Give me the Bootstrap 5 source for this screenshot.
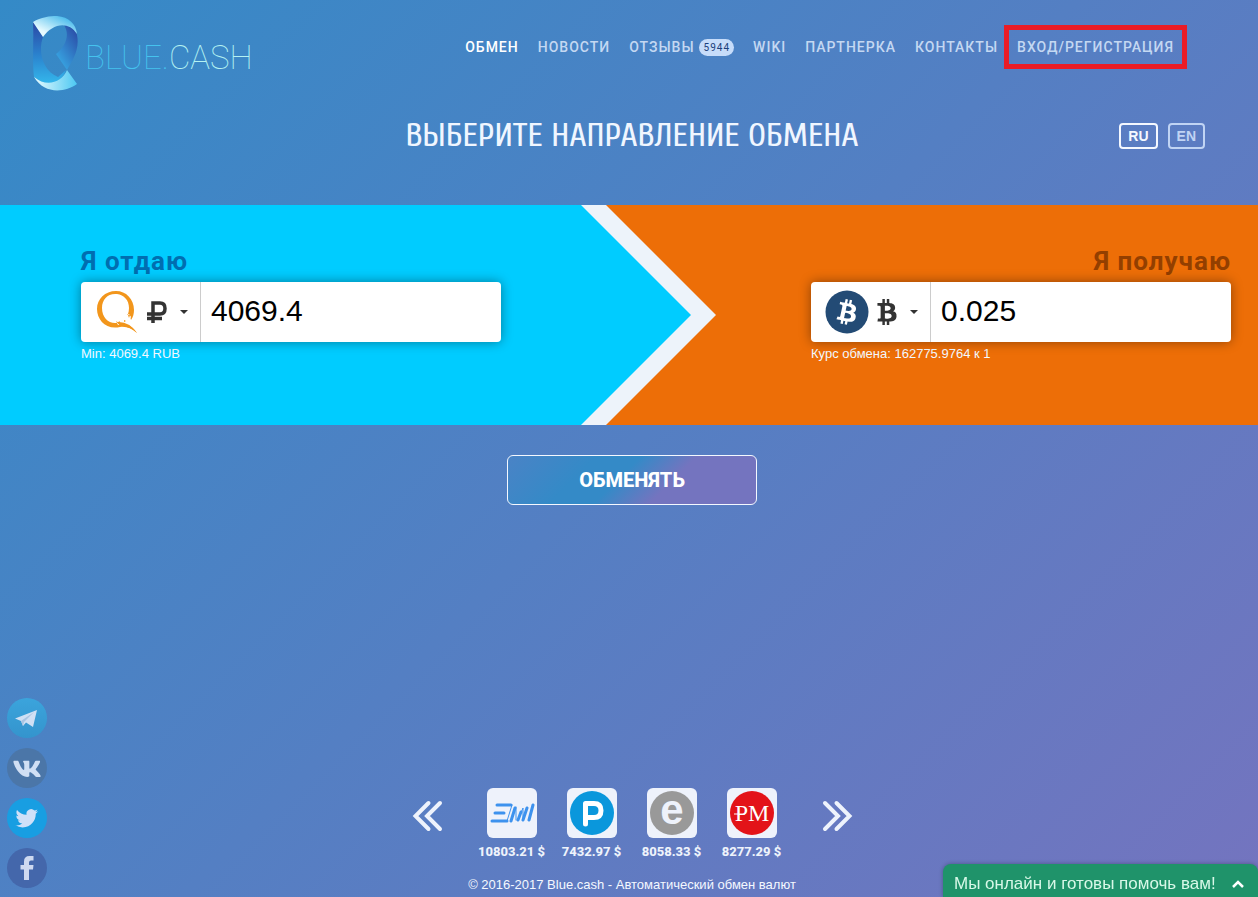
<!DOCTYPE html>
<html lang="ru">
<head>
<meta charset="utf-8">
<meta name="viewport" content="width=device-width, initial-scale=1">
<title>Blue.cash</title>
<link href="https://cdn.jsdelivr.net/npm/bootstrap@5.3.0/dist/css/bootstrap.min.css" rel="stylesheet">
<style>
  body { font-family: Roboto, "Liberation Sans", sans-serif; background: linear-gradient(135deg, #348ac7, #7474bf) fixed; color: #eef3fb; font-size: 13px; line-height: 20px; }
  .page { padding-left: 6px; }
  .site-head { padding: 16px 75px 0 27px; }
  .brand-text { font-size: 33px; line-height: 40px; font-weight: 100; color: #45c3ee; margin: 8px 0 0 6px; }
  .brand-text span { color: #b4f2f2; }
  .main-nav .nav-link { color: #c4d8f2; font-size: 14px; font-weight: 500; letter-spacing: 1px; line-height: 20px; padding: 5px 9px 5px 10px; white-space: nowrap; }
  .main-nav .nav-link.active { color: #fff; }
  .main-nav { margin-top: 16px; }
  .count { background: #c6dcfa; color: #1c3f7c; font-size: 10px; font-weight: 400; line-height: 17px; padding: 0 4px 0 5px; margin-left: 4px; border-radius: 9px; display: inline-block; vertical-align: top; margin-top: 2px; }
  .framed { position: relative; }
  .framed::after { content: ""; position: absolute; inset: -7px -4px -7px -3px; border: 5px solid #ea1c26; pointer-events: none; }
  .title-row { display: grid; grid-template-columns: 1fr auto 1fr; align-items: center; padding: 24px 0 49px; }
  .title-row h1 { grid-column: 2; margin: 0; font: 400 34px/40px "Cuprum", "Roboto Condensed", "Liberation Sans Narrow", Roboto, sans-serif; color: #f0f6ff; }
  .langs { gap: 10px; padding-right: 53px; }
  .langs .btn { font: 700 14px/20px "Liberation Sans", sans-serif; border: 2px solid; border-radius: 4px; padding: 1px 7px; color: #c0d4f4; }
  .langs .btn.active { color: #f4f8ff; border-color: #f4f8ff; }
  .band { position: relative; background: #ed6e07; height: 220px; isolation: isolate; }
  .band::before, .band::after { content: ""; position: absolute; inset: 0 auto 0 0; z-index: -1; clip-path: polygon(0 0, calc(100% - 110px) 0, 100% 50%, calc(100% - 110px) 100%, 0 100%); }
  .band::before { width: calc(50% + 87px); background: #edf3fa; }
  .band::after { width: calc(50% + 62px); background: #0cf; }
  .give, .take { padding: 41px 27px 0 81px; }
  .amount { width: 100%; max-width: 420px; }
  .amount label { font-size: 26px; line-height: 30px; font-weight: 700; letter-spacing: 1px; margin-bottom: 6px; display: block; }
  .give label { color: #006eb0; }
  .take label { color: #933f00; text-align: right; }
  .amount .input-group { height: 60px; box-shadow: 0 0 12px rgba(0,0,0,.4); border-radius: 4px; }
  .amount .btn { width: 120px; background: #fff; border: 0; border-right: 1px solid #ccc; border-radius: 4px 0 0 4px; padding: 0 12px 0 14px; color: #333; }
  .amount .form-control { border: 0; color: #000; font: 30px/40px "Liberation Sans", sans-serif; padding: 9px 10px 11px 11px; border-radius: 0 4px 4px 0; }
  .amount .dropdown-toggle::after { margin: 0 0 0 auto; border-width: 4px; border-bottom: 0; }
  .hint { font: 13px/20px "Liberation Sans", sans-serif; margin-top: 2px; color: #f4f9ff; }
  .action { padding-top: 30px; }
  .go { width: 250px; height: 50px; border: 1px solid #f4f8ff; border-radius: 6px; color: #fff; font-weight: 800; font-size: 20px; background: linear-gradient(135deg, #4a83c6 0, #348ac7 30%, #348ac7 45%, #7474bf 64%); }
  .go:hover { color: #fff; }
  .socials { position: fixed; left: 7px; bottom: 9px; gap: 10px; }
  .socials a { width: 40px; height: 40px; }
  .socials svg, .tile svg, .arrow svg { display: block; overflow: visible; }
  .reserve { width: 80px; }
  .tile { width: 50px; height: 50px; border-radius: 6px; background: #eef2fb; margin: 0 auto 4px; }
  .reserve span { font-weight: 800; font-size: 13px; white-space: nowrap; }
  .arrow { border: 0; background: none; padding: 0; height: 56px; }
  .arrow-left { margin-right: 29px; }
  .arrow-right { margin-left: 30px; }
  .copy { font: 13px/20px "Liberation Sans", sans-serif; margin: 13px 0 2px; color: #f4f8ff; }
  .chat { position: fixed; right: 0; bottom: 0; width: 315px; height: 33px; background: #1f936a; color: #d8f8e8; border: 0; border-radius: 8px 8px 0 0; padding: 6px 14px 0 11px; font: 17px/24px "Liberation Sans", sans-serif; box-shadow: 0 0 4px rgba(0,0,0,.3); white-space: nowrap; }
</style>
</head>
<body>
<div class="min-vh-100 d-flex flex-column">
  <header class="page">
    <div class="site-head d-flex justify-content-between align-items-start">
      <a href="#" class="d-flex align-items-center text-decoration-none">
        <svg width="46" height="76" viewBox="0 0 46 76" aria-hidden="true">
          <defs>
            <linearGradient id="lt" x1="0" y1="1" x2="1" y2="0"><stop offset=".25" stop-color="#e8fbff"/><stop offset=".9" stop-color="#3bb5ea"/></linearGradient>
            <linearGradient id="ll" x1="0" y1="0" x2="0" y2="1"><stop offset=".05" stop-color="#2b4da8"/><stop offset=".5" stop-color="#2a7fcc"/><stop offset="1" stop-color="#34b8ec"/></linearGradient>
            <linearGradient id="lb" x1="0" y1="0" x2="1" y2="0"><stop offset="0" stop-color="#e8fbff"/><stop offset="1" stop-color="#4cc8f2"/></linearGradient>
            <linearGradient id="lr" x1="1" y1="0" x2=".3" y2="1"><stop offset=".1" stop-color="#2a4ba6"/><stop offset="1" stop-color="#38a8e4"/></linearGradient>
          </defs>
          <path d="M0 6C1 25-1 45 1 61C8 70 22 70 27 64C30 61 32 57 33 54L25 61C9 54 5 35 10 21Z" fill="url(#ll)"/>
          <path d="M28 8C37 8 43 12 44 19C47 34 39 45 34 54L23 38C31 32 38 20 31 9Z" fill="url(#lr)"/>
          <path d="M0 6C8 1 17 0 24 0C36 1 43 8 44 18C35 4 19 8 10 21Z" fill="url(#lt)"/>
          <path d="M1 61C14 72 29 66 34 54L44 68C31 77 11 78 1 61Z" fill="url(#lb)"/>
        </svg>
        <span class="brand-text">BLUE.<span>CASH</span></span>
      </a>
      <nav aria-label="Главное меню">
        <ul class="nav main-nav">
          <li class="nav-item"><a class="nav-link active" href="#">ОБМЕН</a></li>
          <li class="nav-item"><a class="nav-link" href="#">НОВОСТИ</a></li>
          <li class="nav-item"><a class="nav-link" href="#">ОТЗЫВЫ<span class="count">5944</span></a></li>
          <li class="nav-item"><a class="nav-link" href="#">WIKI</a></li>
          <li class="nav-item"><a class="nav-link" href="#">ПАРТНЕРКА</a></li>
          <li class="nav-item"><a class="nav-link" href="#">КОНТАКТЫ</a></li>
          <li class="nav-item framed"><a class="nav-link" href="#">ВХОД/РЕГИСТРАЦИЯ</a></li>
        </ul>
      </nav>
    </div>
    <div class="title-row">
      <h1>ВЫБЕРИТЕ НАПРАВЛЕНИЕ ОБМЕНА</h1>
      <div class="langs d-flex justify-content-end">
        <button type="button" class="btn active">RU</button>
        <button type="button" class="btn">EN</button>
      </div>
    </div>
  </header>

  <main>
    <section class="band">
      <div class="row g-0">
        <div class="col-6 give">
          <div class="amount">
            <label for="give">Я отдаю</label>
            <div class="input-group">
              <button class="btn dropdown-toggle d-flex align-items-center" type="button" aria-label="Валюта: Qiwi RUB">
                <svg width="44" height="44" viewBox="0 0 44 44" aria-hidden="true">
                  <path fill="#f2961c" fill-rule="evenodd" d="M21 1C31 1 39 9 39 20C39 24 38 27 36 30L35 26L32 24L33 28L30 27L31 30L27 29L29 33L24 31L24 33L21 31L23 35C31 33 38 36 42 43C36 38 31 36 25 37C11 40 2 30 2 19C2 9 10 1 21 1ZM22 4C13 3 7 9 7 18C7 27 13 33 20 33C28 33 34 27 34 18C34 10 29 5 22 4Z"/>
                  <path fill="#fff" d="M22 31L34 24L36 27L33 31L36 35L29 34Z"/>
                  <path fill="#f2961c" d="M24 31l2 2-3 1zM29 30l2 1-2 1zM33 25l2 0-1 3zM22 32q12-1 20 11q-7-7-17-7z"/>
                </svg>
                <svg width="20" height="22" viewBox="0 0 20 22" class="ms-2" aria-hidden="true"><path d="M6 22V2H13Q18 2 18 7.500T13 13H0M0 17.500H15" fill="none" stroke="#333" stroke-width="3.500"/></svg>
              </button>
              <input id="give" class="form-control" type="text" value="4069.4">
            </div>
            <div class="hint">Min: 4069.4 RUB</div>
          </div>
        </div>
        <div class="col-6 take d-flex justify-content-end">
          <div class="amount">
            <label for="take">Я получаю</label>
            <div class="input-group">
              <button class="btn dropdown-toggle d-flex align-items-center" type="button" aria-label="Валюта: Bitcoin BTC">
                <svg width="44" height="44" viewBox="0 0 44 44" aria-hidden="true"><circle cx="22" cy="22" r="21.500" fill="#234b75"/><g transform="rotate(12 22 22) translate(13 9.500) scale(.049)"><path fill="#fff" d="M310.204 242.638c27.73-14.18 45.377-39.39 41.28-81.3-5.358-57.351-52.458-76.573-114.85-81.929V0h-48.528v77.203c-12.605 0-25.525.315-38.444.63V0h-48.53v79.409c-17.842.539-38.622.276-97.37 0v51.678c38.314-.678 58.417-3.14 63.023 21.427v217.429c-2.925 19.492-18.524 16.685-53.255 16.071L3.765 443.68c88.481 0 97.37.315 97.37.315V512h48.53v-67.06c13.234.315 26.154.315 38.444.315V512h48.528v-68.005c81.299-4.412 135.647-24.894 142.895-101.467 5.671-61.446-23.32-88.862-69.326-99.89zM150.608 134.553c27.415 0 113.126-8.507 113.126 48.528 0 54.515-85.71 48.212-113.126 48.212v-96.74zm0 251.776V279.821c32.772 0 133.127-9.138 133.127 53.255-.001 60.186-100.355 53.253-133.127 53.253z"/></g></svg>
                <svg width="20" height="26" viewBox="0 0 384 512" class="ms-2" aria-hidden="true"><path fill="#333" d="M310.204 242.638c27.73-14.18 45.377-39.39 41.28-81.3-5.358-57.351-52.458-76.573-114.85-81.929V0h-48.528v77.203c-12.605 0-25.525.315-38.444.63V0h-48.53v79.409c-17.842.539-38.622.276-97.37 0v51.678c38.314-.678 58.417-3.14 63.023 21.427v217.429c-2.925 19.492-18.524 16.685-53.255 16.071L3.765 443.68c88.481 0 97.37.315 97.37.315V512h48.53v-67.06c13.234.315 26.154.315 38.444.315V512h48.528v-68.005c81.299-4.412 135.647-24.894 142.895-101.467 5.671-61.446-23.32-88.862-69.326-99.89zM150.608 134.553c27.415 0 113.126-8.507 113.126 48.528 0 54.515-85.71 48.212-113.126 48.212v-96.74zm0 251.776V279.821c32.772 0 133.127-9.138 133.127 53.255-.001 60.186-100.355 53.253-133.127 53.253z"/></svg>
              </button>
              <input id="take" class="form-control" type="text" value="0.025">
            </div>
            <div class="hint">Курс обмена: 162775.9764 к 1</div>
          </div>
        </div>
      </div>
    </section>
    <div class="page action text-center">
      <button type="button" class="btn go">ОБМЕНЯТЬ</button>
    </div>
  </main>

  <footer class="page mt-auto text-center">
    <div class="d-flex justify-content-center align-items-start">
      <button type="button" class="arrow arrow-left" aria-label="Назад"><svg width="30" height="56" viewBox="0 0 30 56"><path d="M15.500 15L2.500 28L15.500 41M27 15L14 28L27 41" fill="none" stroke="#eef3fc" stroke-width="4" stroke-linecap="round"/></svg></button>
      <div class="reserve">
        <div class="tile"><svg width="50" height="50" viewBox="0 0 50 50"><g fill="none" stroke="#3d92ee" stroke-width="3" stroke-linecap="round"><path d="M10 17H24M8 25H17M5 33H20M28 20L24 33M34 24L31 32M40 20L36 32M46 17L42 32"/><path d="M20 33L25 17M29 19V32M31 32L36 20V32M42 32L46 17" stroke-width="1"/></g></svg></div>
        <span>10803.21 $</span>
      </div>
      <div class="reserve">
        <div class="tile"><svg width="50" height="50" viewBox="0 0 50 50"><circle cx="25" cy="25" r="22" fill="#0a97dc"/><path d="M18.500 36V15.500H27Q34 15.500 34 22.500T27 29.500H20" fill="none" stroke="#fff" stroke-width="5" stroke-linecap="round" stroke-linejoin="round"/></svg></div>
        <span>7432.97 $</span>
      </div>
      <div class="reserve">
        <div class="tile"><svg width="50" height="50" viewBox="0 0 50 50"><circle cx="25" cy="25" r="22" fill="#999"/><text x="25" y="36" text-anchor="middle" font-family="Liberation Sans" font-weight="700" font-size="42" fill="#eef2fb">e</text></svg></div>
        <span>8058.33 $</span>
      </div>
      <div class="reserve">
        <div class="tile"><svg width="50" height="50" viewBox="0 0 50 50"><circle cx="25" cy="25" r="22" fill="#e31319"/><text x="25" y="33" text-anchor="middle" font-family="Liberation Serif" font-size="24" fill="#fff">PM</text><path d="M7 26H18" stroke="#fff"/></svg></div>
        <span>8277.29 $</span>
      </div>
      <button type="button" class="arrow arrow-right" aria-label="Вперёд"><svg width="30" height="56" viewBox="0 0 30 56"><path d="M14.500 15L27.500 28L14.500 41M3 15L16 28L3 41" fill="none" stroke="#eef3fc" stroke-width="4" stroke-linecap="round"/></svg></button>
    </div>
    <p class="copy">© 2016-2017 Blue.cash - Автоматический обмен валют</p>
  </footer>
</div>

<div class="socials d-flex flex-column">
  <a href="#" aria-label="Telegram"><svg width="40" height="40" viewBox="0 0 40 40"><defs><linearGradient id="tg" x1="0" y1="0" x2="0" y2="1"><stop stop-color="#3ba4dc"/><stop offset="1" stop-color="#3494cd"/></linearGradient></defs><circle cx="20" cy="20" r="20" fill="url(#tg)"/><path d="M8 20.500L30 12L26 29L19 24.500L16 28L14 23Z" fill="#d0e0f4"/><path d="M14 23L27 14L17 24L16 28Z" fill="#a9c4e2"/></svg></a>
  <a href="#" aria-label="ВКонтакте"><svg width="40" height="40" viewBox="0 0 40 40"><circle cx="20" cy="20" r="20" fill="#4b76a8"/><path transform="translate(5.500 8) scale(.0505)" fill="#d0dff4" d="M545 117.700c3.700-12.500 0-21.700-17.800-21.700h-58.900c-15 0-21.900 7.900-25.600 16.700 0 0-30 73.100-72.400 120.500-13.700 13.700-20 18.100-27.500 18.100-3.700 0-9.400-4.400-9.400-16.900V117.700c0-15-4.200-21.700-16.600-21.700h-92.600c-9.400 0-15 7-15 13.500 0 14.200 21.200 17.500 23.400 57.500v86.800c0 19-3.400 22.500-10.900 22.500-20 0-68.600-73.400-97.400-157.400-5.800-16.300-11.500-22.900-26.600-22.900H38.800c-16.800 0-20.200 7.900-20.200 16.700 0 15.600 20 93.100 93.100 195.500C160.400 378.100 229 416 291.400 416c37.500 0 42.100-8.400 42.100-22.900 0-66.800-3.400-73.100 15.400-73.100 8.700 0 23.700 4.400 58.700 38.100 40 40 46.600 57.900 69 57.900h58.900c16.800 0 25.300-8.400 20.400-25-11.200-34.900-86.900-106.700-90.300-111.500-8.700-11.200-6.200-16.200 0-26.200.1-.1 72-101.300 79.400-135.600z"/></svg></a>
  <a href="#" aria-label="Twitter"><svg width="40" height="40" viewBox="0 0 40 40"><circle cx="20" cy="20" r="20" fill="#189ee2"/><path transform="translate(8.500 9) scale(.94)" fill="#d0e0f8" d="M23.953 4.570a10 10 0 01-2.825.775 4.958 4.958 0 002.163-2.723c-.951.555-2.005.959-3.127 1.184a4.920 4.920 0 00-8.384 4.482C7.690 8.095 4.067 6.130 1.640 3.162a4.822 4.822 0 00-.666 2.475c0 1.710.870 3.213 2.188 4.096a4.904 4.904 0 01-2.228-.616v.06a4.923 4.923 0 003.946 4.827 4.996 4.996 0 01-2.212.085 4.936 4.936 0 004.604 3.417 9.867 9.867 0 01-6.102 2.105c-.39 0-.779-.023-1.170-.067a13.995 13.995 0 007.557 2.209c9.053 0 13.998-7.496 13.998-13.985 0-.21 0-.42-.015-.63A9.935 9.935 0 0024 4.590z"/></svg></a>
  <a href="#" aria-label="Facebook"><svg width="40" height="40" viewBox="0 0 40 40"><circle cx="20" cy="20" r="20" fill="#4467ab"/><path d="M17 32V21.500H13.500V17H17V13.500Q17 8 22.500 8H26.500V12.500H24Q22 12.500 22 14.500V17H26.500L26 21.500H22V32Z" fill="#ced9f0"/></svg></a>
</div>

<button type="button" class="chat d-flex justify-content-between align-items-center">Мы онлайн и готовы помочь вам!
  <svg width="12" height="8" viewBox="0 0 12 8" aria-hidden="true"><path d="M1 7L6 2L11 7" fill="none" stroke="#fff" stroke-width="2.500"/></svg>
</button>
<script src="https://cdn.jsdelivr.net/npm/bootstrap@5.3.0/dist/js/bootstrap.bundle.min.js"></script>
</body>
</html>
